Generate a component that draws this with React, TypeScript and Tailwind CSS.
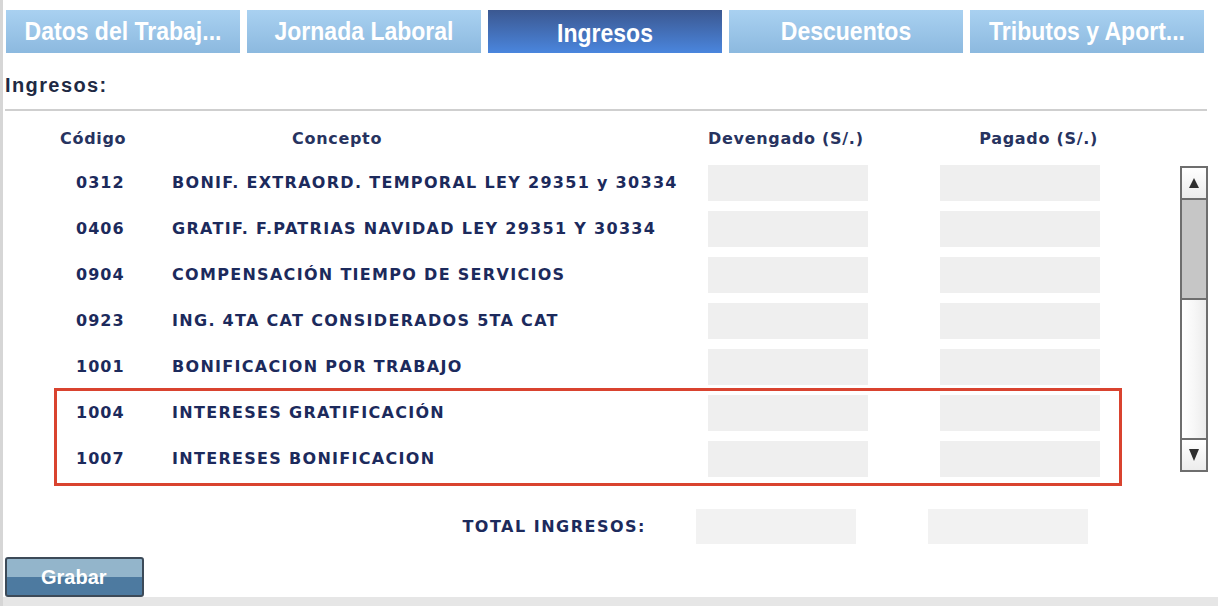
import React from "react";

const tabs = [
  { label: "Datos del Trabaj...", active: false },
  { label: "Jornada Laboral", active: false },
  { label: "Ingresos", active: true },
  { label: "Descuentos", active: false },
  { label: "Tributos y Aport...", active: false },
];

const rows = [
  { code: "0312", concept: "BONIF. EXTRAORD. TEMPORAL LEY 29351 y 30334" },
  { code: "0406", concept: "GRATIF. F.PATRIAS NAVIDAD LEY 29351 Y 30334" },
  { code: "0904", concept: "COMPENSACIÓN TIEMPO DE SERVICIOS" },
  { code: "0923", concept: "ING. 4TA CAT CONSIDERADOS 5TA CAT" },
  { code: "1001", concept: "BONIFICACION POR TRABAJO" },
  { code: "1004", concept: "INTERESES GRATIFICACIÓN" },
  { code: "1007", concept: "INTERESES BONIFICACION" },
];

const tableFont = "font-['DejaVu_Sans',Verdana,sans-serif]";

function Scrollbar() {
  return (
    <div className="flex h-[306px] w-[28px] flex-col border-2 border-[#6e6e6e] bg-[#f4f4f4]">
      <div className="flex h-[32px] items-center justify-center border-b-2 border-[#6e6e6e] bg-gradient-to-b from-white to-[#ececec]">
        <svg width="12" height="12" viewBox="0 0 12 12">
          <path d="M6 1 L11 11 L1 11 Z" fill="#2f2f2f" />
        </svg>
      </div>
      <div className="h-[100px] border-b-2 border-[#6e6e6e] bg-[#c6c6c6]" />
      <div className="flex-1 bg-gradient-to-r from-white via-[#f7f7f7] to-[#ececec]" />
      <div className="flex h-[32px] items-center justify-center border-t-2 border-[#6e6e6e] bg-gradient-to-b from-white to-[#ececec]">
        <svg width="12" height="14" viewBox="0 0 12 14">
          <path d="M1 1 L11 1 L6 13 Z" fill="#2f2f2f" />
        </svg>
      </div>
    </div>
  );
}

export default function App() {
  return (
    <div className="relative flex h-[606px] w-[1218px] flex-col overflow-hidden border-l-[3px] border-[#d6d6d6] bg-white font-['Liberation_Sans',Arial,sans-serif]">
      {/* tabs */}
      <div className="flex gap-[7px] pl-[3px] pt-[10px]">
        {tabs.map((t) => (
          <div
            key={t.label}
            className={
              t.active
                ? "flex h-[43px] w-[234px] items-center justify-center bg-gradient-to-b from-[#3b5891] to-[#4a86de] pt-[4px] text-[23px] font-bold text-white"
                : "flex h-[43px] w-[234px] items-center justify-center bg-gradient-to-b from-[#a9d1f1] to-[#8cb9df] text-[23px] font-bold text-white"
            }
          >
            <span className="inline-block scale-y-[1.1]">{t.label}</span>
          </div>
        ))}
      </div>

      <div className="mt-[20px] h-[24px] pl-[2px] text-[20px] font-bold leading-[24px] tracking-[1.4px] text-[#1f2a44]">
        Ingresos:
      </div>
      <div className="ml-[2px] mt-[12px] h-[2px] w-[1202px] bg-[#cfcfcf]" />

      {/* header */}
      <div className={`mt-[18px] flex h-[20px] items-center text-[16px] font-bold tracking-[0.7px] text-[#27335f] ${tableFont}`}>
        <div className="w-[167px] pl-[57px]">Código</div>
        <div className="w-[538px] pl-[122px]">Concepto</div>
        <div className="w-[160px]">Devengado (S/.)</div>
        <div className="w-[230px] text-right">Pagado (S/.)</div>
      </div>

      {/* rows */}
      <div className="mt-[16px] flex">
        <div className="flex flex-col gap-[10px]">
          {rows.map((r) => (
            <div key={r.code} className={`flex h-[36px] items-center text-[16px] font-bold tracking-[1.3px] text-[#1c2a5c] ${tableFont}`}>
              <div className="w-[169px] pl-[73px] tracking-[1px]">{r.code}</div>
              <div className="w-[536px]">{r.concept}</div>
              <div className="h-[36px] w-[160px] bg-[#efefef]" />
              <div className="ml-[72px] h-[36px] w-[160px] bg-[#efefef]" />
            </div>
          ))}
        </div>
        <div className="ml-[80px] mt-[1px]">
          <Scrollbar />
        </div>
      </div>

      {/* total */}
      <div className="mt-[32px] flex items-center">
        <div className={`w-[693px] pr-[50px] text-right text-[16px] font-bold tracking-[1.5px] text-[#1c2a5c] ${tableFont}`}>
          TOTAL INGRESOS:
        </div>
        <div className="h-[35px] w-[160px] bg-[#f2f2f2]" />
        <div className="ml-[72px] h-[35px] w-[160px] bg-[#f2f2f2]" />
      </div>

      <div className="mt-[13px] pl-[2px]">
        <button className="flex h-[40px] w-[139px] items-center rounded-[3px] border-2 border-[#3c4a58] bg-gradient-to-b from-[#93b5cb] from-50% to-[#4d7aa0] to-50% pl-[34px] text-[20px] font-bold text-white">
          Grabar
        </button>
      </div>

      <div className="absolute bottom-0 left-0 h-[9px] w-full bg-[#e6e6e6]" />

      {/* highlight annotation */}
      <div className="absolute left-[51px] top-[388px] h-[98px] w-[1068px] border-[3px] border-[#d9432f]" />
    </div>
  );
}
